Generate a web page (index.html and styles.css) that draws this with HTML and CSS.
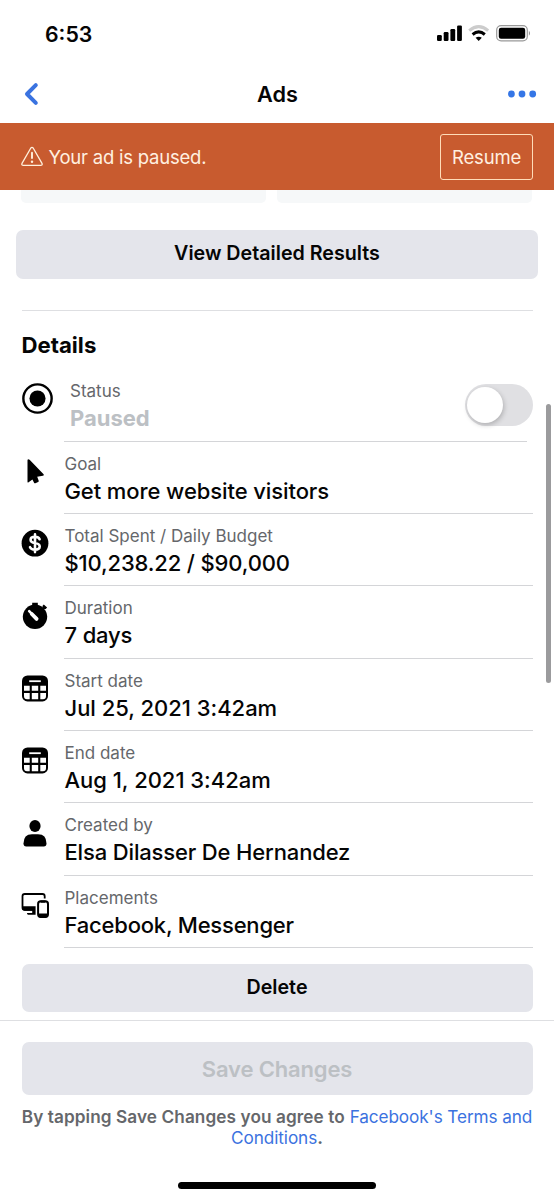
FILE: index.html
```html
<!DOCTYPE html>
<html lang="en">
<head>
<meta charset="utf-8">
<title>Ads</title>
<link rel="stylesheet" href="styles.css">
</head>
<body>
<div class="screen">
  <div class="statusbar">
    <span class="time">6:53</span>
    <svg class="signals" width="96" height="20" viewBox="0 0 96 20">
      <g fill="#000">
        <rect x="1" y="11" width="4.8" height="6" rx="1.2"/>
        <rect x="7.7" y="8" width="4.8" height="9" rx="1.2"/>
        <rect x="14.4" y="5" width="4.8" height="12" rx="1.2"/>
        <rect x="21.1" y="1.4" width="4.8" height="15.6" rx="1.2"/>
        <path d="M42.7 17 L39.6 13.8 Q42.7 11.6 45.8 13.8 Z"/>
      </g>
      <path d="M33.2 6.6 Q42.7 -1.4 52.2 6.6" fill="none" stroke="#ccc" stroke-width="3"/>
      <path d="M36.6 10.5 Q42.7 5.3 48.8 10.5" fill="none" stroke="#000" stroke-width="3"/>
      <rect x="60.7" y="1.7" width="30.6" height="15.2" rx="4.4" fill="none" stroke="#999" stroke-width="1.2"/>
      <rect x="62.8" y="3.8" width="26.4" height="11" rx="2.2"/>
      <path d="M92.9 6.8 Q95 9.3 92.9 11.8 Z" fill="#888"/>
    </svg>
  </div>

  <header class="navbar">
    <svg width="20" height="28" viewBox="0 0 20 28"><path d="M13.8 5.2 L5 14 L13.8 22.8" fill="none" stroke="#3a73e0" stroke-width="4" stroke-linecap="round" stroke-linejoin="round"/></svg>
    <h1 class="title">Ads</h1>
    <svg class="more" width="30" height="10" viewBox="0 0 30 10" fill="#3576e6"><circle cx="4.4" cy="5" r="3.4"/><circle cx="15" cy="5" r="3.4"/><circle cx="25.7" cy="5" r="3.4"/></svg>
  </header>

  <div class="banner">
    <svg class="warn" width="22" height="22" viewBox="0 0 22 22" fill="none" stroke="#fff0dc" stroke-width="1.3" stroke-linejoin="round" stroke-linecap="round"><path d="M9.7 2.2 Q11 .4 12.3 2.2 L21 17.4 Q21.7 19.4 19.6 19.4 H2.4 Q.3 19.4 1 17.4 Z"/><path d="M11 6.8 V12" stroke-width="1.9"/><path d="M11 15.6 V15.7" stroke-width="2.4"/></svg>
    <span class="banner-text">Your ad is paused.</span>
    <button class="resume">Resume</button>
  </div>

  <main class="content">
    <div class="stubs"><div class="stub"></div><div class="stub"></div></div>
    <button class="btn results">View Detailed Results</button>
    <section class="details">
      <h2 class="heading">Details</h2>

      <div class="status">
        <svg width="31" height="31" viewBox="0 0 32 32"><circle cx="16" cy="16" r="14.6" fill="none" stroke="#000" stroke-width="2.5"/><circle cx="16" cy="16" r="8.3"/></svg>
        <div class="status-body">
          <div class="label">Status</div>
          <div class="value paused">Paused</div>
        </div>
        <div class="toggle"><div class="knob"></div></div>
      </div>

      <div class="row">
        <svg class="icon" width="28" height="28" viewBox="0 0 28 28"><path d="M6.5 3.2 V24.7 Q6.6 26 7.6 25.3 L11.4 22.4 L13.2 25.9 Q13.6 26.6 14.4 26.2 L17.1 25 Q18 24.6 17.7 23.8 L16.2 19.8 L21.8 18.8 Q23.6 18.4 22.6 17.2 L8.6 2.8 Q6.7 1.6 6.5 3.2 Z"/></svg>
        <div class="row-body"><div class="label">Goal</div><div class="value goal">Get more website visitors</div></div>
      </div>
      <div class="row">
        <svg class="icon" width="28" height="28" viewBox="0 0 28 28"><circle cx="14" cy="14.2" r="13.4"/><path d="M18.6 10.2 Q17.6 7.8 14 7.8 Q9.6 7.8 9.6 10.7 Q9.6 13.3 14 14 Q18.7 14.7 18.7 17.6 Q18.7 20.7 14 20.7 Q10 20.7 9 18.1 M14 5.4 V23.1" fill="none" stroke="#fff" stroke-width="2.6" stroke-linecap="round"/></svg>
        <div class="row-body"><div class="label">Total Spent / Daily Budget</div><div class="value">$10,238.22 / $90,000</div></div>
      </div>
      <div class="row">
        <svg class="icon" width="28" height="28" viewBox="0 0 28 28"><circle cx="14" cy="14.8" r="12.2"/><path d="M11.2 1.9 H16.8 M14 1.6 V5 M22 3.3 L25.3 6.4 M23.7 4.9 L21 7.8" stroke="#000" stroke-width="2.3"/><path d="M10.8 12 L15.6 16.9" stroke="#fff" stroke-width="3.8" stroke-linecap="round"/><path d="M8.2 9.2 L10.6 11.6" stroke="#fff" stroke-width="2.6" stroke-linecap="round"/></svg>
        <div class="row-body"><div class="label">Duration</div><div class="value">7 days</div></div>
      </div>
      <div class="row">
        <svg class="icon" width="28" height="28" viewBox="0 0 28 28"><rect x="1" y="1.4" width="26" height="26" rx="5.5"/><path d="M8.2 7.2 H19.8" stroke="#fff" stroke-width="1.8"/><path d="M3 11.8 H8.7 V16.7 H3 Z M10.8 11.8 H17.2 V16.7 H10.8 Z M19.3 11.8 H25 V16.7 H19.3 Z M3 18.9 H8.7 V25.2 H6 Q3 25.2 3 22.2 Z M10.8 18.9 H17.2 V25.2 H10.8 Z M19.3 18.9 H25 V22.2 Q25 25.2 22 25.2 H19.3 Z" fill="#fff"/></svg>
        <div class="row-body"><div class="label">Start date</div><div class="value date">Jul 25, 2021 3:42am</div></div>
      </div>
      <div class="row">
        <svg class="icon" width="28" height="28" viewBox="0 0 28 28"><rect x="1" y="1.4" width="26" height="26" rx="5.5"/><path d="M8.2 7.2 H19.8" stroke="#fff" stroke-width="1.8"/><path d="M3 11.8 H8.7 V16.7 H3 Z M10.8 11.8 H17.2 V16.7 H10.8 Z M19.3 11.8 H25 V16.7 H19.3 Z M3 18.9 H8.7 V25.2 H6 Q3 25.2 3 22.2 Z M10.8 18.9 H17.2 V25.2 H10.8 Z M19.3 18.9 H25 V22.2 Q25 25.2 22 25.2 H19.3 Z" fill="#fff"/></svg>
        <div class="row-body"><div class="label">End date</div><div class="value date">Aug 1, 2021 3:42am</div></div>
      </div>
      <div class="row">
        <svg class="icon" width="28" height="28" viewBox="0 0 28 28"><ellipse cx="14" cy="6.9" rx="5.6" ry="6"/><path d="M2.5 24.5 Q2.5 15.2 11 15.2 H17 Q25.5 15.2 25.5 24.5 Q25.5 27.4 22.8 27.4 H5.2 Q2.5 27.4 2.5 24.5 Z"/></svg>
        <div class="row-body"><div class="label">Created by</div><div class="value">Elsa Dilasser De Hernandez</div></div>
      </div>
      <div class="row">
        <svg class="icon" width="28" height="28" viewBox="0 0 28 28"><path d="M23.7 7.4 V5.3 Q23.7 3 21.4 3 H3.8 Q1.5 3 1.5 5.3 V16.6 Q1.5 18.9 3.8 18.9 H14" fill="none" stroke="#000" stroke-width="1.8"/><path d="M1 15.3 H14.6 V19.7 H4 Q1 19.7 1 16.6 Z M11.2 19.6 H14.6 V23.8 H7.2 Q5.2 23 6.2 22.1 H11.2 Z"/><rect x="17.1" y="10.3" width="9.9" height="15.6" rx="2.6" fill="#fff" stroke="#000" stroke-width="2"/><path d="M17 22.4 H27 V23.6 Q27 26.4 24.5 26.4 H19.5 Q17 26.4 17 23.6 Z M19.5 9.6 H24.5 V11.8 H19.5 Z"/></svg>
        <div class="row-body"><div class="label">Placements</div><div class="value placements">Facebook, Messenger</div></div>
      </div>
      <button class="btn delete">Delete</button>
    </section>
    <div class="scrollbar"></div>
  </main>

  <footer class="footer">
    <button class="btn save">Save Changes</button>
    <p class="terms"><span class="terms-lead">By tapping Save Changes you agree to</span> <a>Facebook's Terms and<br>Conditions</a><b>.</b></p>
    <div class="home"></div>
  </footer>
</div>
</body>
</html>
```
FILE: styles.css
```css
* { box-sizing: border-box; }
body {
  margin: 0;
  background: #fff;
  color: #050505;
  font-family: Inter, "Liberation Sans", sans-serif;
}
svg { display: block; flex: none; }
button { font: inherit; color: inherit; border: 0; padding: 0; }
h1, h2, p { margin: 0; }

.screen {
  display: flex;
  flex-direction: column;
  width: 554px;
  height: 1200px;
  overflow: hidden;
}
.statusbar {
  display: flex;
  justify-content: space-between;
  align-items: center;
  height: 66px;
  padding: 0 22px 0 45px;
}
.signals { margin-top: 1px; }
.time { margin-top: 1px; font-size: 21.3px; font-weight: 600; line-height: 26px; }
.navbar {
  display: grid;
  grid-template-columns: 1fr auto 1fr;
  align-items: center;
  height: 57px;
  padding: 0 17px 2px 22px;
}
.title { margin-left: -4px; font-size: 21.7px; font-weight: 600; line-height: 28px; }
.more { justify-self: end; }

.banner {
  display: flex;
  align-items: center;
  height: 67px;
  padding: 0 21px;
  background: #c85b2f;
  color: #fff0e0;
  font-size: 18.5px;
}
.banner-text { margin: 1px 0 0 5.5px; letter-spacing: -.22px; }
.resume {
  width: 93px;
  height: 46px;
  margin-left: auto;
  padding-top: 1px;
  border: 1px solid #ffdcb8;
  border-radius: 3px;
  background: none;
  letter-spacing: -.15px;
}

.content { position: relative; height: 830px; }
.stubs {
  display: grid;
  grid-template-columns: 245px 255px;
  gap: 11px;
  padding-left: 21px;
}
.stub { height: 13px; border-radius: 0 0 5px 5px; background: #f6f8f9; }
.btn {
  display: block;
  border-radius: 7px;
  background: #e4e5eb;
  text-align: center;
  font-weight: 600;
}
.results {
  width: 522px;
  height: 48.5px;
  margin: 27px 16px 0;
  padding-bottom: 3px;
  font-size: 19.7px;
}
.details {
  margin: 31.5px 21.5px 0;
  border-top: 1px solid #dedfe2;
}
.heading {
  padding-top: 20px;
  font-size: 22.2px;
  font-weight: 700;
  line-height: 28px;
}
.status {
  position: relative;
  display: flex;
  height: 82.5px;
  padding-top: 23.5px;
}
.status-body {
  width: 463px;
  height: 59px;
  margin-left: 11.5px;
  padding-left: 6px;
  border-bottom: 1px solid #d4d5d8;
}
.status-body .label { margin-top: -2px; }
.toggle {
  position: absolute;
  right: 0;
  top: 24.5px;
  width: 68px;
  height: 42px;
  padding: 3px 2.5px;
  border-radius: 21px;
  background: #e0e0e3;
}
.knob {
  width: 36px;
  height: 36px;
  border-radius: 50%;
  background: #fff;
  box-shadow: 1px 2px 5px rgba(0, 0, 0, .22);
}
.row { display: flex; height: 72.36px; }
.icon { margin: 15.5px 0 0 -1px; }
.row-body {
  flex: 1;
  margin-left: 15.5px;
  padding: 12px 0 0 .5px;
  border-bottom: 1px solid #d4d5d8;
}
.label { color: #65676b; font-size: 17px; line-height: 20px; }
.value {
  margin-top: 3.2px;
  font-size: 22px;
  font-weight: 500;
  line-height: 28px;
  letter-spacing: -.15px;
  white-space: nowrap;
}
.goal { letter-spacing: -.09px; }
.placements { letter-spacing: -.21px; }
.date { letter-spacing: -.02px; }
.paused { font-weight: 700; color: #bcc0c4; letter-spacing: 0; }
.delete { width: 511px; height: 48px; margin-top: 16px; padding-bottom: 3px; font-size: 19.7px; }
.scrollbar {
  position: absolute;
  right: 3px;
  top: 214px;
  width: 5px;
  height: 279px;
  border-radius: 3px;
  background: #9b9b9d;
}

.footer {
  height: 180px;
  border-top: 1px solid #dedfe2;
  padding: 21px 21.5px 0;
}
.save { width: 511px; height: 53px; color: #bcc0c4; font-size: 22px; letter-spacing: -.15px; }
.terms {
  margin: 11px -5px 0;
  color: #65676b;
  font-size: 17.2px;
  line-height: 21px;
  text-align: center;
  white-space: nowrap;
}
.terms-lead { font-weight: 600; letter-spacing: .09px; }
.terms a { color: #3b72e0; letter-spacing: -.1px; }
.home {
  width: 198px;
  height: 7px;
  margin: 34px auto 0;
  border-radius: 4px;
  background: #000;
}
```
